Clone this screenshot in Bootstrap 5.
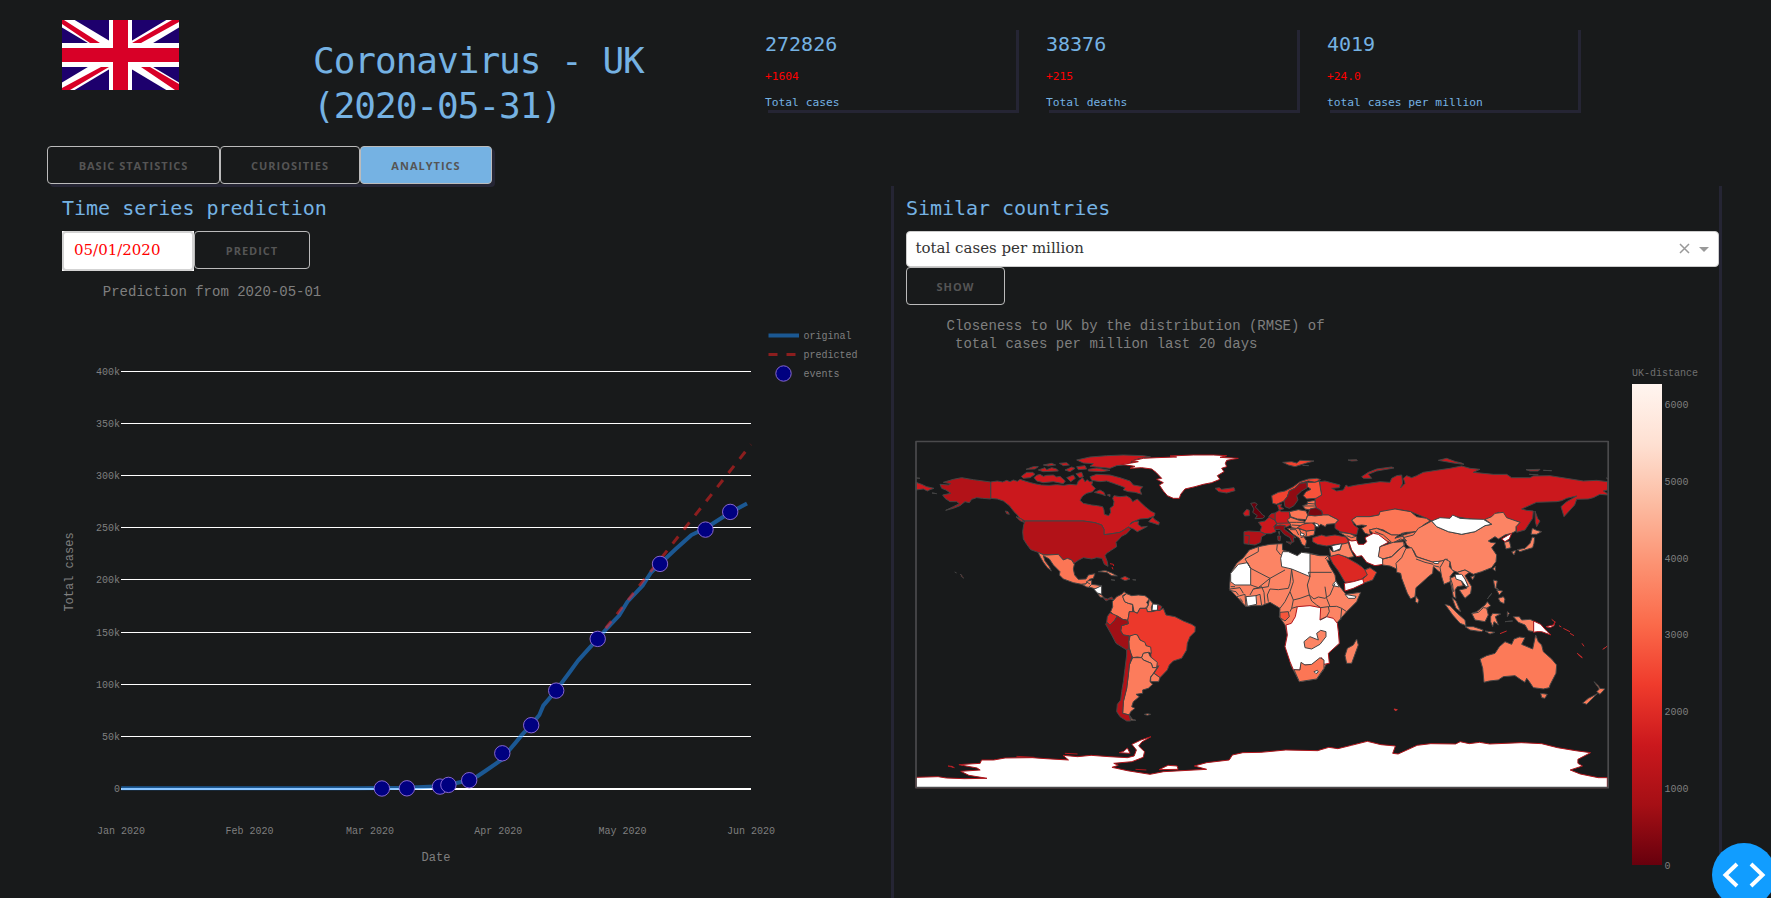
<!DOCTYPE html>
<html lang="en">
<head>
<meta charset="utf-8">
<title>Coronavirus - UK</title>
<link rel="stylesheet" href="https://cdn.jsdelivr.net/npm/bootstrap@5.3.0/dist/css/bootstrap.min.css">
<script src="https://cdn.jsdelivr.net/npm/bootstrap@5.3.0/dist/js/bootstrap.bundle.min.js"></script>
<style>
html,body{height:898px;overflow:hidden}
body{background:#181a1b;color:#75b2e3;font-family:"DejaVu Sans Mono",monospace}
.topbar{height:146px;padding-left:62px}
.flag{width:117px;height:70px;margin-top:20px}
.title{font-size:36px;line-height:45px;letter-spacing:-1px;margin:38px 0 0 134px;width:452px;font-weight:400}
.stat{width:251px;height:83px;margin:27px 30px 0 0;box-shadow:3px 3px 0 #252534}
.stat .num{font-size:20px;line-height:30px;margin-top:2px}
.stat .delta{font-size:11.25px;line-height:18px;color:#f00;margin-top:9px}
.stat .lbl{font-size:11.25px;line-height:18px;margin-top:8px}
.tabs{margin-left:47px;width:445px;height:38px;box-shadow:3px 3px 0 #252534;border-radius:4px}
.cbtn{height:38px;padding:1px 0 0;border:1px solid #bbb;border-radius:4px;background:#181a1b;color:#555;font:700 11px/35px "Open Sans",sans-serif;letter-spacing:1px;text-align:center}
.cbtn.on{background:#75b2e3}
.panel{height:730px;box-shadow:3px 3px 0 #252534;margin-top:-1px}
.panel-l{width:844px;margin-left:47px;padding:10px 0 0 15px}
.panel-r{width:813px;margin-left:15px;padding-top:10px}
.panel h2{font-size:20px;line-height:30px;font-weight:400;margin:0 0 8px}
.panel-r h2{letter-spacing:-.03px}
.datebox{width:132px;height:40px;background:#fff;border:2px solid #d3d3d3;border-radius:4px;color:#f00;font:15px/35px "DejaVu Serif",serif;padding-left:10px}
.picker{height:36px;background:#fff;border:1px solid #ccc;border-radius:4px;color:#333;font:15px/32px "DejaVu Serif",serif;padding:0 8px 0 8.5px}
svg text{font-family:"Liberation Mono",monospace;fill:#7f7f7f;white-space:pre}
.t10{font-size:10px;fill:#707070}.t12{font-size:12px}.t14{font-size:14px}
.map path{vector-effect:non-scaling-stroke;stroke:#444;stroke-width:1;stroke-linejoin:round}
.map .w{fill:#fff}.map .wr{fill:#fff;stroke:#b0161c}.map .s{fill:#fc8464}.map .o{fill:#fc7655}.map .r{fill:#cb181d}.map .d{fill:#b21218}.map .k{fill:#7a0610}.map .m{fill:#dc2823}.map .f{fill:#f04330}
.map .b{fill:none}
.fab{position:fixed;left:1712px;top:843px;width:64px;height:64px}
</style>
</head>
<body>
<header class="topbar d-flex align-items-start">
  <svg class="flag flex-shrink-0" viewBox="0 0 117 70">
    <path fill="#1d006d" d="M0 0H117V70H0z"/>
    <path stroke="#fff" stroke-width="13" d="M0 0L117 70M117 0L0 70"/>
    <path fill="#d80027" d="M0 0V4L28 23H38L2 0zM117 0H110L70 23H79L117 2zM0 70H8L47 47H39L0 68zM117 70V64L88 47H79L113 70z"/>
    <path fill="#fff" d="M47 0H70V70H47zM0 23H117V47H0z"/>
    <path fill="#d80027" d="M51 0H66V70H51zM0 28H117V42H0z"/>
  </svg>
  <h1 class="title flex-shrink-0">Coronavirus - UK<br>(2020-05-31)</h1>
  <div class="stat flex-shrink-0"><div class="num">272826</div><div class="delta">+1604</div><div class="lbl">Total cases</div></div>
  <div class="stat flex-shrink-0"><div class="num">38376</div><div class="delta">+215</div><div class="lbl">Total deaths</div></div>
  <div class="stat flex-shrink-0"><div class="num">4019</div><div class="delta">+24.0</div><div class="lbl">total cases per million</div></div>
</header>
<nav class="tabs d-flex">
  <button class="cbtn" style="width:173px">BASIC STATISTICS</button>
  <button class="cbtn" style="width:140px">CURIOSITIES</button>
  <button class="cbtn on" style="width:132px">ANALYTICS</button>
</nav>
<main class="d-flex">
<section class="panel panel-l flex-shrink-0">
  <h2>Time series prediction</h2>
  <div class="d-flex">
    <div class="bg-white"><div class="datebox">05/01/2020</div></div>
    <button class="cbtn" style="width:116px">PREDICT</button>
  </div>
  <svg class="d-block" width="829" height="627" viewBox="62 271 829 627">
    <text class="t14" x="102.800" y="296">Prediction from 2020-05-01</text>
    <path stroke="#fff" d="M121 371.5H751M121 423.5H751M121 475.5H751M121 527.5H751M121 579.5H751M121 632.5H751M121 684.5H751M121 736.5H751"/>
    <path stroke="#fff" stroke-width="2" d="M121 789H751"/>
    <g class="t10" text-anchor="end">
      <text x="120" y="375">400k</text><text x="120" y="427">350k</text><text x="120" y="479">300k</text><text x="120" y="531">250k</text><text x="120" y="583">200k</text><text x="120" y="636">150k</text><text x="120" y="688">100k</text><text x="120" y="740">50k</text><text x="120" y="792">0</text>
    </g>
    <g class="t10" text-anchor="middle">
      <text x="121" y="834">Jan 2020</text><text x="249.500" y="834">Feb 2020</text><text x="369.900" y="834">Mar 2020</text><text x="498.300" y="834">Apr 2020</text><text x="622.500" y="834">May 2020</text><text x="751" y="834">Jun 2020</text>
    </g>
    <text class="t12" x="436" y="861" text-anchor="middle">Date</text>
    <text class="t12" transform="translate(73 572) rotate(-90)" text-anchor="middle">Total cases</text>
    <g transform="translate(0 310) scale(.56123 .375)" fill="none">
      <path vector-effect="non-scaling-stroke" stroke="#1e90ff" stroke-opacity=".53" stroke-width="4" stroke-linejoin="round" d="M216 1275H640L725 1274 784 1270 799 1266 836 1254 850 1244 866 1228 895 1198 905 1178 918 1155 930 1133 946 1107 961 1080 968 1055 985 1025 998 1000 1013 970 1030 935 1048 905 1065 877 1082 848 1103 815 1118 778 1145 735 1160 700 1176 677 1205 636 1232 600 1257 582 1280 560 1301 540 1331 516"/>
    </g>
    <path stroke="#ff2222" stroke-opacity=".5" stroke-width="3" stroke-dasharray="9 9" d="M605.700 628.300L751 444.500"/>
    <g fill="#000080" stroke="#9370db" stroke-width=".9">
      <circle cx="381.900" cy="788.500" r="7.700"/><circle cx="406.900" cy="788.300" r="7.700"/><circle cx="440" cy="786.600" r="7.700"/><circle cx="448.400" cy="784.900" r="7.700"/><circle cx="469.200" cy="780.200" r="7.700"/><circle cx="502.300" cy="753.300" r="7.700"/><circle cx="531.200" cy="725.200" r="7.700"/><circle cx="556.200" cy="690.600" r="7.700"/><circle cx="597.700" cy="638.900" r="7.700"/><circle cx="660" cy="563.900" r="7.700"/><circle cx="705.500" cy="529.600" r="7.700"/><circle cx="730.200" cy="511.900" r="7.700"/><circle cx="783.500" cy="373.500" r="7.700"/>
    </g>
    <path stroke="#1e90ff" stroke-opacity=".53" stroke-width="4" d="M768.500 335.500H799"/>
    <path stroke="#ff2222" stroke-opacity=".5" stroke-width="3" stroke-dasharray="9 9" d="M768.500 354.500H799"/>
    <g class="t10"><text x="803.500" y="339">original</text><text x="803.500" y="358">predicted</text><text x="803.500" y="377">events</text></g>
  </svg>
</section>
<section class="panel panel-r flex-shrink-0">
  <h2>Similar countries</h2>
  <div class="picker d-flex justify-content-between">
    <span>total cases per million</span>
    <svg width="32" height="34" viewBox="0 0 32 34"><path stroke="#999" stroke-width="1.500" d="M2 12L11 21M11 12L2 21"/><path fill="#999" d="M21 15H31L26 20z"/></svg>
  </div>
  <button class="cbtn d-block" style="width:99px">SHOW</button>
  <svg class="d-block map" width="813" height="593" viewBox="906 305 813 593">
    <defs><linearGradient id="reds" x1="0" y1="0" x2="0" y2="1"><stop offset="0" stop-color="#fff5f0"/><stop offset=".125" stop-color="#fee0d2"/><stop offset=".25" stop-color="#fcbba1"/><stop offset=".375" stop-color="#fc9272"/><stop offset=".5" stop-color="#fb6a4a"/><stop offset=".625" stop-color="#ef3b2c"/><stop offset=".75" stop-color="#cb181d"/><stop offset=".875" stop-color="#a50f15"/><stop offset="1" stop-color="#67000d"/></linearGradient></defs>
    <text class="t14" x="946.500" y="330">Closeness to UK by the distribution (RMSE) of</text>
    <text class="t14" x="955" y="348">total cases per million last 20 days</text>

    <!-- North America -->
    <g transform="translate(910 435) scale(.33333)">
      <path class="r" d="M242 141L262 138 278 141 290 136 300 140 310 135 322 139 330 133 345 138 362 143 378 147 395 150 418 151 440 149 462 151 480 148 500 150 505 138 518 128 525 140 532 134 538 140 548 140 545 150 556 160 548 170 530 175 518 183 510 196 520 205 545 210 562 212 578 215 582 225 583 238 596 242 602 232 600 220 610 212 612 200 608 190 612 182 630 185 650 183 662 190 668 200 682 192 698 208 706 215 722 228 735 235 733 243 715 250 690 252 665 262 660 268 672 260 686 258 684 268 695 276 712 274 698 282 682 290 670 282 655 276 645 283 630 292 600 297 582 299 582 283 575 270 555 263 520 258 345 258 330 250 322 240 312 230 298 212 280 198 262 192 242 190z"/>
      <path class="r" d="M716 260L728 246 735 254 748 262 746 270 735 266zM372 128L380 121 390 118 400 124 410 121 430 120 440 126 450 124 466 138 460 146 430 140 400 143 380 138zM334 124L350 112 368 112 375 118 360 128 340 130zM348 103L370 95 385 95 375 102zM385 105L405 98 410 104 425 98 440 102 445 108 400 110zM400 90L425 85 437 90 415 93zM500 75L540 66 590 62 640 60 700 62 722 66 690 70 665 78 660 88 620 92 600 100 560 96 540 94 550 86 520 84zM535 103L560 99 600 106 575 110 535 108zM540 125L560 118 600 120 630 128 660 138 670 150 698 155 690 165 695 178 675 172 655 170 640 165 645 158 630 152 610 145 590 138 570 140 545 136zM465 105L485 96 495 100 480 110zM498 116L515 112 520 125 508 128zM470 128L490 120 496 130 482 140zM448 85L470 83 478 90 460 92zM500 95L525 92 530 102 505 104zM553 172L570 165 582 172 586 182 575 178zM592 180L600 178 600 185zM318 245L335 252 342 262 330 257zM286 228L294 230 298 238 290 236z"/>
      <path class="d" d="M242 141V192L218 190 200 188 185 193 178 203 165 200 150 212 130 220 107 226 130 215 148 206 140 200 120 200 105 190 98 180 122 175 108 165 95 160 90 148 115 150 122 146 100 142 130 133 155 128 190 134z"/>
      <path class="r" d="M18 142L35 148 50 155 72 160 60 164 52 168 40 162 18 165zM18 129L30 130zM66 174L80 176z"/>
      <path class="d" d="M345 258H520L555 263 575 270 582 283V299L600 297 630 292 645 283 655 276 662 283 650 296 635 304 625 315 618 322 620 335 605 345 590 355 585 362 592 380 594 394 583 388 576 370 560 368 545 372 520 368 505 376 492 385 485 375 472 370 460 375 445 358 415 360 402 360 384 352 362 344 350 328 340 312 338 290 341 270z"/>
      <path class="o" d="M384 352L402 360 415 360 445 358 460 375 472 370 485 375 493 388 490 402 494 420 505 433 528 432 535 420 555 416 550 430 538 433 528 447 515 448 490 443 460 432 448 420 450 410 430 390 418 372 400 362 405 378 418 395 424 408 412 398 400 382 392 368z"/>
      <path class="s" d="M515 448L528 447 532 438 545 436 545 448 575 452 565 460 555 462 545 458 530 456zM562 474L575 480 582 488 570 486zM565 410L585 406 605 414 622 423 605 422 590 412zM603 434L615 436zM668 434L678 435z"/>
      <path class="b" d="M528 440L540 447M545 448L536 457"/>
      <path class="w" d="M575 452V478L562 474 552 463z"/>
      <path class="d" d="M580 488L592 492 605 486 612 495 600 492 588 498z"/>
      <path class="m" d="M632 430L645 424 660 432 645 437zM134 411L140 414M150 418L156 421 154 424 162 430"/>
      <path class="b" style="stroke:#c8181e" d="M600 386L610 388 611 393M606 396L609 403"/>
    </g>

    <!-- Greenland, Iceland, South America -->
    <g transform="translate(1080 435) scale(.33333)">
      <path class="wr" d="M125 88L155 84 175 80 155 78 190 70 230 68 290 66 270 63 340 60 400 60 440 62 420 67 475 70 440 76 436 85 440 95 425 100 432 110 412 122 420 133 395 143 370 148 345 155 315 162 302 178 298 190 280 190 262 182 250 168 238 150 250 143 230 133 245 130 228 112 215 102 185 98 150 100 165 94z"/>
      <path class="r" d="M405 160L418 158 425 163 462 158 465 167 440 174 416 170z"/>
      <path class="o" d="M97 500L110 485 125 478 132 470 140 476 128 482 134 500 145 505 158 508V532L148 530 145 548 143 556 128 553 115 545 100 540 92 530 98 515z"/>
      <path class="s" d="M140 476L155 482 175 480 195 482 208 492 200 502 205 510 200 520 180 520 172 535 162 530 158 508 145 505 134 500 128 485zM208 492L218 505 214 518 216 530 202 530 198 518 205 510z"/>
      <path class="f" style="fill:#ec382b" d="M145 548L148 530 162 530 172 535 180 520 200 520 202 530 216 530 232 526 240 526 250 520 258 540 285 545 310 558 335 568 346 575 345 590 330 605 322 625 320 645 305 670 280 678 268 690 262 705 240 728 222 715 235 695 214 680 212 655 195 625 180 615 172 600 150 603 130 600 122 588 125 572 145 566 143 556z"/>
      <path class="w" d="M218 507L234 508 232 526 216 526z"/><path class="r" d="M234 508L246 515 240 526 232 526z"/>
      <path class="m" d="M82 545L90 533 112 543 105 555 90 570 80 562z"/>
      <path style="fill:#a01016" d="M112 543L128 553 143 556 145 566 125 572 122 588 130 600 147 603V640L140 645 108 625 95 600 77 568 80 562 90 570 105 555z"/>
      <path class="o" d="M150 603L165 598 172 600 180 615 195 622 198 632 212 636 214 655 205 652 190 655 185 668 172 666 158 668 152 655 148 640 147 620z"/>
      <path class="s" d="M190 655L205 652 211 665 232 682 230 698 218 698 214 685 190 675 185 668z"/>
      <path class="o" style="fill:#fc7c5c" d="M158 668H185L190 675 214 685 218 698 230 698 236 692 222 712 212 728 212 742 218 748 205 760 188 765 188 775 168 778 178 785 160 800 155 815 165 820 152 830 148 840 128 835 130 800 140 760 145 720 148 690zM222 715L240 728 236 740 210 740 212 725z"/>
      <path class="d" d="M140 645L148 640 156 665 148 690 145 720 140 760 130 800 128 835 148 840 152 858 140 858 120 845 110 830 112 808 122 795 125 770 130 740 135 700 140 660z"/>
      <path class="s" d="M150 842L156 852 168 856 154 856zM193 838L203 836 212 838 202 841z"/>
    </g>

    <!-- Eurasia -->
    <g transform="translate(1210 435) scale(.33333)">
      <path class="r" d="M315 190L335 180 332 165 328 140 345 138 390 150 388 158 365 160 380 168 400 165 408 150 415 155 440 150 475 145 510 140 540 142 545 130 560 122 575 120 578 145 572 158 585 145 580 130 590 122 605 128 620 122 640 112 685 105 720 100 755 93 780 100 810 103 790 112 850 118 890 118 905 128 960 128 970 123 1020 122 1070 130 1120 138 1160 136 1193 140V165L1180 168 1193 176V180L1170 178 1150 188 1135 192 1100 193 1094 210 1062 245 1053 215 1070 200 1100 183 1070 190 1055 197 1040 200 980 202 935 222 950 226 970 228 968 250 945 285 920 292 918 275 930 262 890 250 865 232 845 247 825 255 780 252 730 244 720 250 665 258 650 250 602 230 555 222 507 240 480 245 440 245 425 255 432 270 445 280 440 300 420 296 390 290 375 280 375 268 385 255 355 240 338 240 335 228 318 218 315 205z"/>
      <path class="r" d="M455 125L475 112 500 102 545 96 552 99 500 108 475 118 485 130 460 130zM685 76L710 70 737 80 755 84 762 88 730 84zM948 104L990 103 985 108 960 108zM1000 106L1025 107zM958 118L985 120zM414 75L440 74 442 77 425 78zM975 228L983 250 990 258 980 275 976 260zM1189 129L1194 132z"/>
      <path class="f" d="M218 82L245 80 260 84 270 76 312 78 290 84 255 95 235 90zM278 91L296 92z"/>
      <path class="o" d="M425 255L440 245 480 245 507 240 510 230 555 222 602 230 620 245 650 250 660 258 640 270 630 285 615 292 590 292 565 300 545 300 520 285 500 280 478 285 482 300 465 295 455 280 470 272 455 270 440 272z"/>
      <path class="o" d="M478 285L500 280 520 288 545 300 565 300 555 310 580 300 630 286 615 300 590 312 565 318 545 325 525 315 505 300 490 296zM388 292L420 296 440 305 440 316 425 318 415 312 408 304z"/>
      <path class="b" d="M495 290L520 300 545 322M555 308L580 304 575 295 615 290M410 302L425 308 438 304"/>
      <path class="wr" d="M415 315L425 318 440 316 445 328 462 328 470 320 465 308 490 295 505 298 535 322 510 335 508 355 518 372 520 388 495 392 470 382 455 362 440 365 425 345z"/>
      <path class="s" d="M510 335L550 322 580 320 585 330 565 345 545 365 520 372 505 365zM518 372L545 365 580 332 592 342 580 365 562 380 560 402 540 393 518 390z"/>
      <path class="k" style="fill:#67000d" d="M122 205L135 203 142 208 136 216 148 228 158 240 165 244 158 250 135 251 142 242 128 232 132 222z"/>
      <path class="r" d="M100 235L110 223 118 226 118 242 104 243z"/>
      <path class="f" d="M185 182L205 172 225 168 250 155 270 140 295 132 320 130 332 134 315 142 295 138 270 145 255 160 238 168 232 185 222 198 200 208 188 205z"/>
      <path style="fill:#8f0b13" d="M255 160L270 145 290 143 292 158 275 168 260 182 264 195 252 212 238 220 225 215 222 198 232 185 238 168z"/>
      <path style="fill:#f8523a" d="M292 142L315 142 328 138 332 165 335 180 318 190 290 192 280 182 288 170 303 163 292 155z"/>
      <path class="o" d="M292 200L315 196V208L320 220 300 225 285 222 278 212 292 208z"/>
      <path class="b" d="M280 213H318M290 205L315 207"/>
      <path class="r" d="M202 210L215 207 212 216 222 221 208 226zM195 234L208 226 215 230 238 230 240 250 232 256 238 266 215 268 200 265 195 255zM145 262L165 258 178 246 195 256 200 265 192 275 198 290 182 296 165 296 150 290 155 275z"/>
      <path class="d" d="M176 244L184 236 195 234V255L180 248zM102 290L115 288 150 290 168 298 155 305 152 322 135 330 118 328 102 326z"/>
      <path class="b" d="M104 301L118 302 116 328"/>
      <path class="o" d="M238 230L265 224 288 228 293 240 288 254 262 252 242 245zM232 254L242 247 268 256 282 258 284 270 262 282 245 278 240 266z"/>
      <path class="m" d="M200 265L238 264 242 270 230 276 200 276z"/>
      <path class="b" d="M235 262L260 262 282 262M245 270L275 272"/>
      <path style="fill:#900b13" d="M192 274L210 270 226 272 222 282 240 295 258 308 250 308 252 320 246 322 240 308 222 298 210 283 195 284zM228 320L245 322 242 328zM203 303L212 303 210 318 204 316zM205 290L209 290 208 299z"/>
      <path class="o" d="M232 280L262 280 290 288 315 285 312 300 296 304 282 306 290 318 286 334 276 328 268 310 250 298zM284 338L298 338z"/>
      <path class="b" d="M240 284L258 284 266 300M288 288L290 302 272 308M268 282L276 300"/>
      <path class="f" d="M262 278L278 268 305 262 315 272 315 285 290 288 278 284z"/>
      <path class="w" d="M272 293L283 297 280 303 271 302z"/>
      <path class="s" style="fill:#fc7c5c" d="M288 254L293 242 338 240 355 240 385 255 375 266 350 268 346 275 332 268 325 276 312 264 282 264z"/>
      <path class="w" d="M312 263L325 268 326 276 318 275z"/>
      <path class="k" d="M293 240L300 222 318 218 335 228 338 240 315 243z"/>
      <path class="m" d="M308 308L335 300 348 304 375 300 408 306 415 318 412 327 380 328 350 333 322 328 308 320z"/>
      <path class="m" d="M358 365L380 355 405 365 440 385 455 395 465 405 475 400 472 420 455 432 430 440 405 442 385 408 368 385z"/>
      <path class="f" d="M465 405L480 398 500 412 488 435 460 445 458 432 472 420z"/>
      <path class="wr" d="M403 445L430 440 458 432 462 445 430 460 405 468z"/>
      <path class="s" d="M358 340L368 350 390 345 395 328 415 323 420 340 432 365 415 368 385 358 362 364z"/>
      <path class="w" d="M365 332L395 326 390 342 370 350z"/>
    </g>

    <!-- Africa -->
    <g transform="translate(1210 435) scale(.33333)">
      <path class="s" d="M118 345L145 335 180 328 217 326 218 345 235 350 262 362 275 352 300 355 330 362 355 362 358 378 350 374 360 395 375 420 378 440 400 468 408 478 452 472 440 500 410 530 380 565 385 590 388 625 355 655 350 685 340 705 320 732 268 740 258 720 242 690 238 660 225 635 232 600 225 570 208 545 210 520 180 502 155 512 125 512 108 515 80 485 58 462 62 415 80 385 100 368zM440 612L445 630 425 685 410 685 405 662 412 640 430 630z"/>
      <path class="w" d="M218 350L235 350 262 362 275 352 300 355V425L245 402 215 395 212 370zM62 415L85 388 112 383 122 400V450H75L62 440zM108 485L138 482 140 508 112 514zM370 445L378 438 388 456 368 452zM405 478L438 484 435 490 415 490z"/>
      <path class="wr" d="M262 515L300 512 332 518 330 555 350 545 370 550 382 565 385 590 388 625 355 655 358 685 342 688 335 668 305 690 272 690 270 705 250 704 240 680 225 635 232 600 228 570 244 565 256 545z"/>
      <path class="s" d="M282 620L300 605 325 615 320 595 332 586 348 590 348 605 330 628 305 642 285 638z"/>
      <path class="o" d="M252 704L270 705 273 682 285 690 305 688 330 668 342 675V700L320 732 268 740z"/>
      <path class="w" d="M312 710L322 706 325 711 318 716z"/>
      <path class="f" style="fill:#f5553b" d="M210 532L235 530 238 545 225 558 210 548z"/>
      <path class="b" d="M145 335V350L105 372 122 400 180 430 225 405M112 383L122 400M202 328L200 345 212 360M122 450L145 458 180 430M180 430L175 455 130 462 120 480M245 402L240 445 235 460 205 464 180 462 172 480 175 500M300 425L295 412H365M300 425L292 450 298 480 312 492 325 486 345 490 360 480 375 445M245 405L250 440 240 470 250 495 270 490 298 480M240 470L225 500 210 520M250 495L245 520 262 515M245 520L240 530M298 480L305 498 320 510 332 518 355 515 380 514 395 520 410 530M355 515L358 530 350 545 330 555M395 520L392 555M350 490L360 515M138 482L150 478 155 512M162 472L165 508M330 362L300 356M60 462L90 458 100 475M80 485L105 478 108 515M90 490L98 500M62 455L75 455M58 466L78 470 85 480M130 462L155 455 162 472M355 362L345 372M345 455L350 490"/>
    </g>

    <!-- East Asia and Oceania -->
    <g transform="translate(1370 435) scale(.33333)">
      <path class="s" d="M105 318L100 308 130 300 145 280 185 258 200 275 235 290 275 298 315 290 345 272 365 268 345 253 365 245 375 235 400 232 410 248 450 262 438 275 438 288 425 295 405 300 392 308 385 312 375 305 355 318 362 322 378 324 365 338 380 360 378 380 365 398 335 410 310 418 295 410 285 405 262 412 245 405 240 380 215 378 190 382 140 365 130 345 110 330z"/>
      <path class="s" d="M80 400L78 385 95 368 108 340 125 338 138 365 190 382 215 378 232 372 225 385 212 395 215 415 205 408 190 395 188 415 175 425 150 448 138 458 135 485 122 492 112 475 95 430 92 415 80 412z"/>
      <path class="b" d="M95 300L110 318 92 312 72 322M100 325L108 340M138 372L165 382 190 388M190 392L208 396"/>
      <path class="w" d="M185 258L210 248 240 250 248 240 270 250 300 252 340 253 365 268 345 272 315 290 275 298 235 290 200 275zM190 380L208 379 205 386 192 385z"/>
      <path class="s" d="M138 484L147 495 143 505 136 500zM210 398L225 372 240 380 238 395 252 410 240 425 248 450 250 470 240 440 222 448 215 425zM240 430L258 422 275 440 280 452 262 455 255 465 258 490 250 485 245 460zM262 412L285 405 298 412 285 422 305 455 302 475 285 490 278 480 268 465 290 460 292 448 275 425zM368 402L377 393 376 408zM302 425L315 422 308 434zM403 322L418 318 423 338 408 342z"/>
      <path class="w" d="M255 418L275 418 285 432 295 455 288 455 275 438 258 432z"/>
      <path class="wr" d="M395 312L412 302 425 295 418 312 405 320z"/>
      <path class="s" d="M425 350L438 346 432 360zM442 344L465 340 480 325 487 306 494 308 492 325 488 338 465 345 450 350zM483 298L487 280 500 286 515 290 500 298zM370 435L382 438 378 458 386 464 375 460zM385 490L400 485 405 492 402 506 390 500zM352 492L365 475zM380 465L398 468 388 480zM225 508L240 512 262 535 285 555 288 572 270 565 248 540zM285 575L310 575 340 585 335 590 300 585zM305 535L320 530 345 510 352 500 362 512 350 520 355 540 345 560 315 555zM246 488L258 498 272 530 258 520zM362 545L368 535 392 537 376 545 385 570 372 560 368 575 362 560zM345 588L375 592 360 597zM412 530L418 535 412 545zM430 545L448 545 455 555 480 553 491 558V590L475 587 465 570 445 562zM405 560L428 558z"/>
      <path class="b" d="M308 535L325 532 340 518 355 520"/>
      <path class="wr" d="M491 558L512 568 530 588 543 600 515 590 500 590 491 592zM528 575L550 570 555 560 552 572 540 578z"/>
      <path d="M545 553L556 562M567 572L574 576M580 580L600 590M600 595L612 602M636 625L642 634M622 655L637 668 630 664zM698 643L706 638 712 633M390 596L410 588M72 822L82 824 76 827z" style="fill:#fc8464;stroke:#c8282a"/>
      <path class="o" style="fill:#fc7a58" d="M330 672L350 662 375 655 388 635 405 620 425 628 432 612 448 606 465 608 455 628 488 642 497 600 505 620 515 630 520 650 545 672 560 690 558 715 540 750 538 758 520 762 490 758 478 740 470 730 465 742 455 736 435 722 400 725 385 735 358 738 342 742 338 700zM512 775L532 778 525 790 515 788zM672 740L685 752 690 760 705 762 690 778 680 770 688 762zM682 776L668 790 650 808 638 804 655 790z"/>
    </g>

    <!-- Antarctica -->
    <g transform="translate(910 710) scale(.45281 .33333)">
      <path class="wr" d="M13 202L62 200 80 204 120 206 170 205 130 196 112 184 155 180 148 174 108 164 155 160 158 150 185 150 210 144 270 143 300 146 350 150 338 136 370 140 400 136 440 140 480 143 495 138 500 120 490 103 510 90 532 80 512 96 505 108 518 125 515 142 490 155 450 160 460 166 446 172 480 182 530 193 560 185 655 178 628 168 655 158 705 150 712 135 735 128 775 127 830 120 900 122 925 112 945 116 975 106 1010 94 1040 104 1072 108 1066 130 1078 132 1120 106 1150 101 1205 102 1215 95 1235 101 1258 97 1280 102 1350 98 1395 101 1430 113 1470 122 1503 128 1475 148 1475 160 1485 168 1458 180 1480 192 1520 203H1540V233H13zM550 179L570 166 590 168 592 178zM462 128L472 124 480 114 486 130zM84 168L92 169 98 173zM235 139L275 142M342 130L370 132M498 178L522 180"/>
    </g>
    <path d="M916 441.500H1608.200V787.700H916z" fill="none" style="stroke:#4a4a4c;stroke-width:1.700"/>

    <text class="t10" x="1632" y="376">UK-distance</text>
    <rect x="1632" y="384" width="30" height="481" fill="url(#reds)"/>
    <g class="t10"><text x="1664.500" y="408">6000</text><text x="1664.500" y="485">5000</text><text x="1664.500" y="562">4000</text><text x="1664.500" y="638">3000</text><text x="1664.500" y="715">2000</text><text x="1664.500" y="792">1000</text><text x="1664.500" y="869">0</text></g>
  </svg>
</section>
</main>
<svg class="fab" viewBox="0 0 64 64"><circle cx="32" cy="32" r="32" fill="#119dff"/><path fill="none" stroke="#fff" stroke-width="4" d="M25 21L13.500 32 25 43M39 21L50.500 32 39 43"/></svg>
</body>
</html>
